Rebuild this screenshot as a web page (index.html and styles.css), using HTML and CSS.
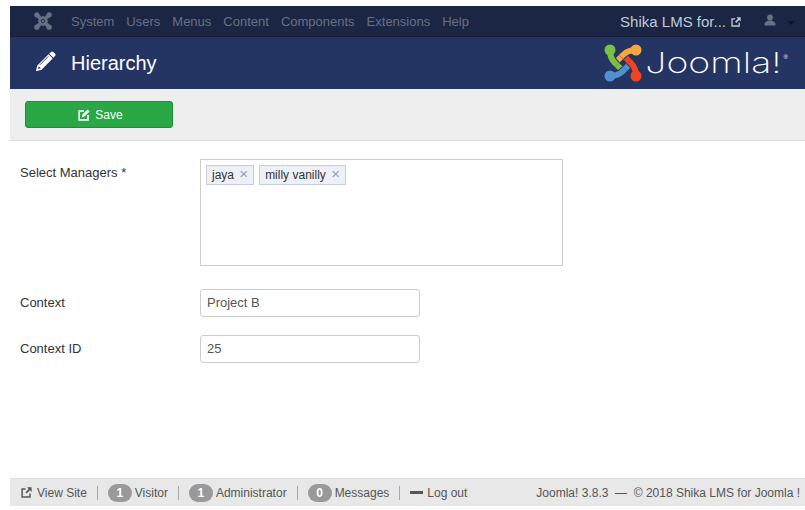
FILE: index.html
```html
<!DOCTYPE html>
<html lang="en">
<head>
  <meta charset="UTF-8" />
  <title>Hierarchy - Shika LMS for Joomla</title>
  <link rel="stylesheet" href="styles.css">
</head>
<body>
  <nav class="navbar">
    <svg class="nav-logo" viewBox="0 0 38 38" width="18" height="18">
      <path d="M5 5L33 33M33 5L5 33" fill="none" stroke="#687085" stroke-width="8"/>
      <path d="M11 19L19 11L27 19L19 27Z" fill="none" stroke="#687085" stroke-width="5"/>
      <path d="M14.5 19L19 14.5L23.5 19L19 23.5Z" fill="none" stroke="#1a2643" stroke-width="2"/>
      <g fill="#687085">
        <circle cx="6" cy="6" r="5.5"/>
        <circle cx="32" cy="6" r="5.5"/>
        <circle cx="32" cy="32" r="5.5"/>
        <circle cx="6" cy="32" r="5.5"/>
      </g>
    </svg>
    <ul class="nav-menu">
      <li>System</li>
      <li>Users</li>
      <li>Menus</li>
      <li>Content</li>
      <li>Components</li>
      <li>Extensions</li>
      <li>Help</li>
    </ul>
    <div class="nav-right">
      <span class="site-name">Shika LMS for...</span>
      <svg class="icon-ext" viewBox="0 0 12 12" width="10" height="10">
        <path d="M5 2.2H1.2v8.6h8.6V7" fill="none" stroke="#c3cad8" stroke-width="1.6"/>
        <path d="M6.6 0.4H11.6V5.4L9.8 3.6 6.2 7.2 4.8 5.8 8.4 2.2Z" fill="#c3cad8"/>
      </svg>
      <svg class="icon-user" viewBox="0 0 12 12" width="12" height="12">
        <circle cx="6" cy="3.4" r="2.9" fill="#687085"/>
        <path d="M0.6 11.6V9.6C0.6 8 3 7.4 4.4 6.6h3.2C9 7.4 11.4 8 11.4 9.6v2Z" fill="#687085"/>
      </svg>
      <span class="caret"></span>
    </div>
  </nav>

  <header class="title-bar">
    <svg class="icon-pen" viewBox="0 0 20 20" width="21" height="21">
      <path d="M15.2 0.9a1.6 1.6 0 0 1 2.2 0l1.7 1.7a1.6 1.6 0 0 1 0 2.2l-1.6 1.6-3.9-3.9Z" fill="#fff"/>
      <path d="M12.9 3.2l3.9 3.9L6.2 17.8 0.8 19.2 2.2 13.8ZM3.6 14.5l-.7 2.6 2.6-.7Z" fill="#fff" fill-rule="evenodd"/>
      <path d="M4.6 13.2L12.6 5.2" stroke="#253563" stroke-width="0.9"/>
    </svg>
    <h1>Hierarchy</h1>
    <div class="brand">
      <svg class="brand-mark" viewBox="0 0 38 38" width="38" height="38">
        <g fill="none" stroke-width="6">
          <path d="M11 19L20 28" stroke="#7ac143"/>
          <path d="M19 11L10 20" stroke="#f9a541"/>
          <path d="M27 19L18 10" stroke="#f44321"/>
          <path d="M19 27L28 18" stroke="#5091cd"/>
        </g>
        <g fill="none" stroke="#253563" stroke-width="8">
          <path d="M6 7C6 13 9 17 11 19L13 21"/>
          <path d="M32 6C26 6 22 8 19 11L17 13"/>
          <path d="M32 32C32 26 29 21 27 19L25 17"/>
          <path d="M6 32C12 32 16 30 19 27L21 25"/>
        </g>
        <g fill="none" stroke-width="6">
          <path d="M6 7C6 13 9 17 11 19L13 21" stroke="#7ac143"/>
          <path d="M32 6C26 6 22 8 19 11L17 13" stroke="#f9a541"/>
          <path d="M32 32C32 26 29 21 27 19L25 17" stroke="#f44321"/>
          <path d="M6 32C12 32 16 30 19 27L21 25" stroke="#5091cd"/>
        </g>
        <circle cx="6" cy="6" r="5.5" fill="#7ac143"/>
        <circle cx="32" cy="6" r="5.5" fill="#f9a541"/>
        <circle cx="32" cy="32" r="5.5" fill="#f44321"/>
        <circle cx="6" cy="32" r="5.5" fill="#5091cd"/>
      </svg>
      <span class="brand-name">Joomla!</span><sup class="brand-reg">®</sup>
    </div>
  </header>

  <div class="toolbar">
    <button type="button" class="btn-save">
      <svg viewBox="0 0 12 12" width="12" height="12">
        <path d="M6 2H1.2v8.8H10V6" fill="none" stroke="#fff" stroke-width="1.7"/>
        <path d="M9.6 0.4l2 2L6.4 7.6 3.8 8.2l.6-2.6Z" fill="#fff"/>
      </svg>
      Save
    </button>
  </div>

  <form class="form">
    <div class="field">
      <label>Select Managers *</label>
      <div class="multi-select">
        <span class="tag">jaya <i>×</i></span>
        <span class="tag">milly vanilly <i>×</i></span>
      </div>
    </div>
    <div class="field">
      <label for="context">Context</label>
      <input type="text" id="context" value="Project B" />
    </div>
    <div class="field">
      <label for="context_id">Context ID</label>
      <input type="text" id="context_id" value="25" />
    </div>
  </form>

  <footer class="status">
    <div class="status-left">
      <span class="status-item">
        <svg viewBox="0 0 12 12" width="11" height="11">
          <path d="M5 2.2H1.2v8.6h8.6V7" fill="none" stroke="#555" stroke-width="1.6"/>
          <path d="M6.6 0.4H11.6V5.4L9.8 3.6 6.2 7.2 4.8 5.8 8.4 2.2Z" fill="#555"/>
        </svg>
        View Site
      </span>
      <span class="status-item"><b class="badge">1</b>Visitor</span>
      <span class="status-item"><b class="badge">1</b>Administrator</span>
      <span class="status-item"><b class="badge">0</b>Messages</span>
      <span class="status-item"><span class="minus"></span>Log out</span>
    </div>
    <div class="status-right">Joomla! 3.8.3 &nbsp;—&nbsp; © 2018 Shika LMS for Joomla !</div>
  </footer>
</body>
</html>
```

FILE: styles.css
```css
body {
  margin: 6px 0 0 10px;
  font-family: "Liberation Sans", Arial, sans-serif;
  font-size: 13px;
  color: #333;
  background-color: #fff;
  height: 500px;
  display: flex;
  flex-direction: column;
  overflow: hidden;
}

.navbar {
  height: 31px;
  box-sizing: border-box;
  background-color: #1a2643;
  border-bottom: 1px solid #151d33;
  display: flex;
  align-items: center;
  padding: 0 10px 0 24px;
  color: #687085;
  flex-shrink: 0;
}

.nav-logo {
  margin-right: 19px;
}

.nav-menu {
  list-style: none;
  display: flex;
  gap: 12px;
  margin: 0;
  padding: 0;
}

.nav-right {
  margin-left: auto;
  display: flex;
  align-items: center;
}

.site-name {
  font-size: 15px;
  color: #c3cad8;
  margin-right: 5px;
}

.icon-ext {
  margin-top: 2px;
}

.icon-user {
  margin-left: 23px;
  margin-top: -3px;
}

.caret {
  width: 0;
  height: 0;
  border-left: 4px solid transparent;
  border-right: 4px solid transparent;
  border-top: 4px solid #0f1526;
  margin: 3px 0 0 11px;
}

.title-bar {
  height: 52px;
  background-color: #253563;
  display: flex;
  align-items: center;
  padding-left: 25px;
  color: #fff;
  flex-shrink: 0;
}

.icon-pen {
  margin-right: 15px;
  margin-top: -3px;
}

.title-bar h1 {
  margin: 0;
  font-size: 20px;
  font-weight: normal;
}

.brand {
  margin-left: auto;
  margin-right: 17px;
  display: flex;
  align-items: center;
}

.brand-mark {
  margin-right: 34px;
}

/* wordmark is much wider than any installed font */
.brand-name {
  font-family: "Inter", sans-serif;
  font-weight: 200;
  font-size: 29px;
  line-height: 38px;
  transform: scaleX(1.29);
  transform-origin: right center;
}

.brand-reg {
  font-size: 6px;
  line-height: 6px;
  align-self: flex-start;
  margin: 10px 0 0 2px;
}

.toolbar {
  height: 52px;
  box-sizing: border-box;
  background-color: #eee;
  border-bottom: 1px solid #ddd;
  padding: 12px 15px;
  flex-shrink: 0;
}

.btn-save {
  width: 148px;
  height: 27px;
  background-color: #2aa845;
  border: 1px solid #238b39;
  border-radius: 3px;
  color: #fff;
  font-family: inherit;
  font-size: 12px;
  display: flex;
  align-items: center;
  justify-content: center;
  gap: 5px;
  padding: 0 0 0 3px;
}

.form {
  flex: 1;
  padding: 18px 10px 0;
}

.field {
  display: flex;
  align-items: flex-start;
  margin-bottom: 18px;
}

.field label {
  width: 180px;
  padding-top: 5px;
  line-height: 18px;
  color: #333;
}

.multi-select {
  width: 363px;
  height: 107px;
  box-sizing: border-box;
  border: 1px solid #ccc;
  padding: 5px;
  display: flex;
  align-items: flex-start;
  gap: 5px;
  margin-bottom: 5px;
}

.tag {
  height: 20px;
  box-sizing: border-box;
  background-color: #eef0f7;
  border: 1px solid #c5cde0;
  padding: 0 5px;
  font-size: 12px;
  line-height: 16px;
  color: #333;
}

.tag i {
  font-style: normal;
  font-size: 15px;
  color: #97a0bb;
  margin-left: 2px;
}

.field input {
  width: 220px;
  height: 28px;
  box-sizing: border-box;
  border: 1px solid #ccc;
  border-radius: 3px;
  padding: 0 6px 2px;
  font-family: inherit;
  font-size: 13px;
  color: #555;
}

.status {
  height: 28px;
  box-sizing: border-box;
  background-color: #e8e8e8;
  border-top: 1px solid #ddd;
  display: flex;
  align-items: center;
  justify-content: space-between;
  padding: 0 5px 0 10px;
  font-size: 12px;
  color: #555;
  flex-shrink: 0;
}

.status-left {
  display: flex;
  align-items: center;
}

.status-item {
  display: flex;
  align-items: center;
  height: 14px;
  padding-right: 10px;
  margin-right: 10px;
  border-right: 1px solid #aaa;
  gap: 5px;
}

.status-item:last-child {
  border-right: none;
}

.status-item svg {
  margin-left: 1px;
}

.badge {
  min-width: 24px;
  height: 18px;
  box-sizing: border-box;
  border-radius: 9px;
  background-color: #999;
  color: #fff;
  font-size: 12px;
  text-align: center;
  line-height: 18px;
  margin-right: -2px;
}

.minus {
  width: 13px;
  height: 3px;
  background-color: #555;
  margin-right: -1px;
}
```
